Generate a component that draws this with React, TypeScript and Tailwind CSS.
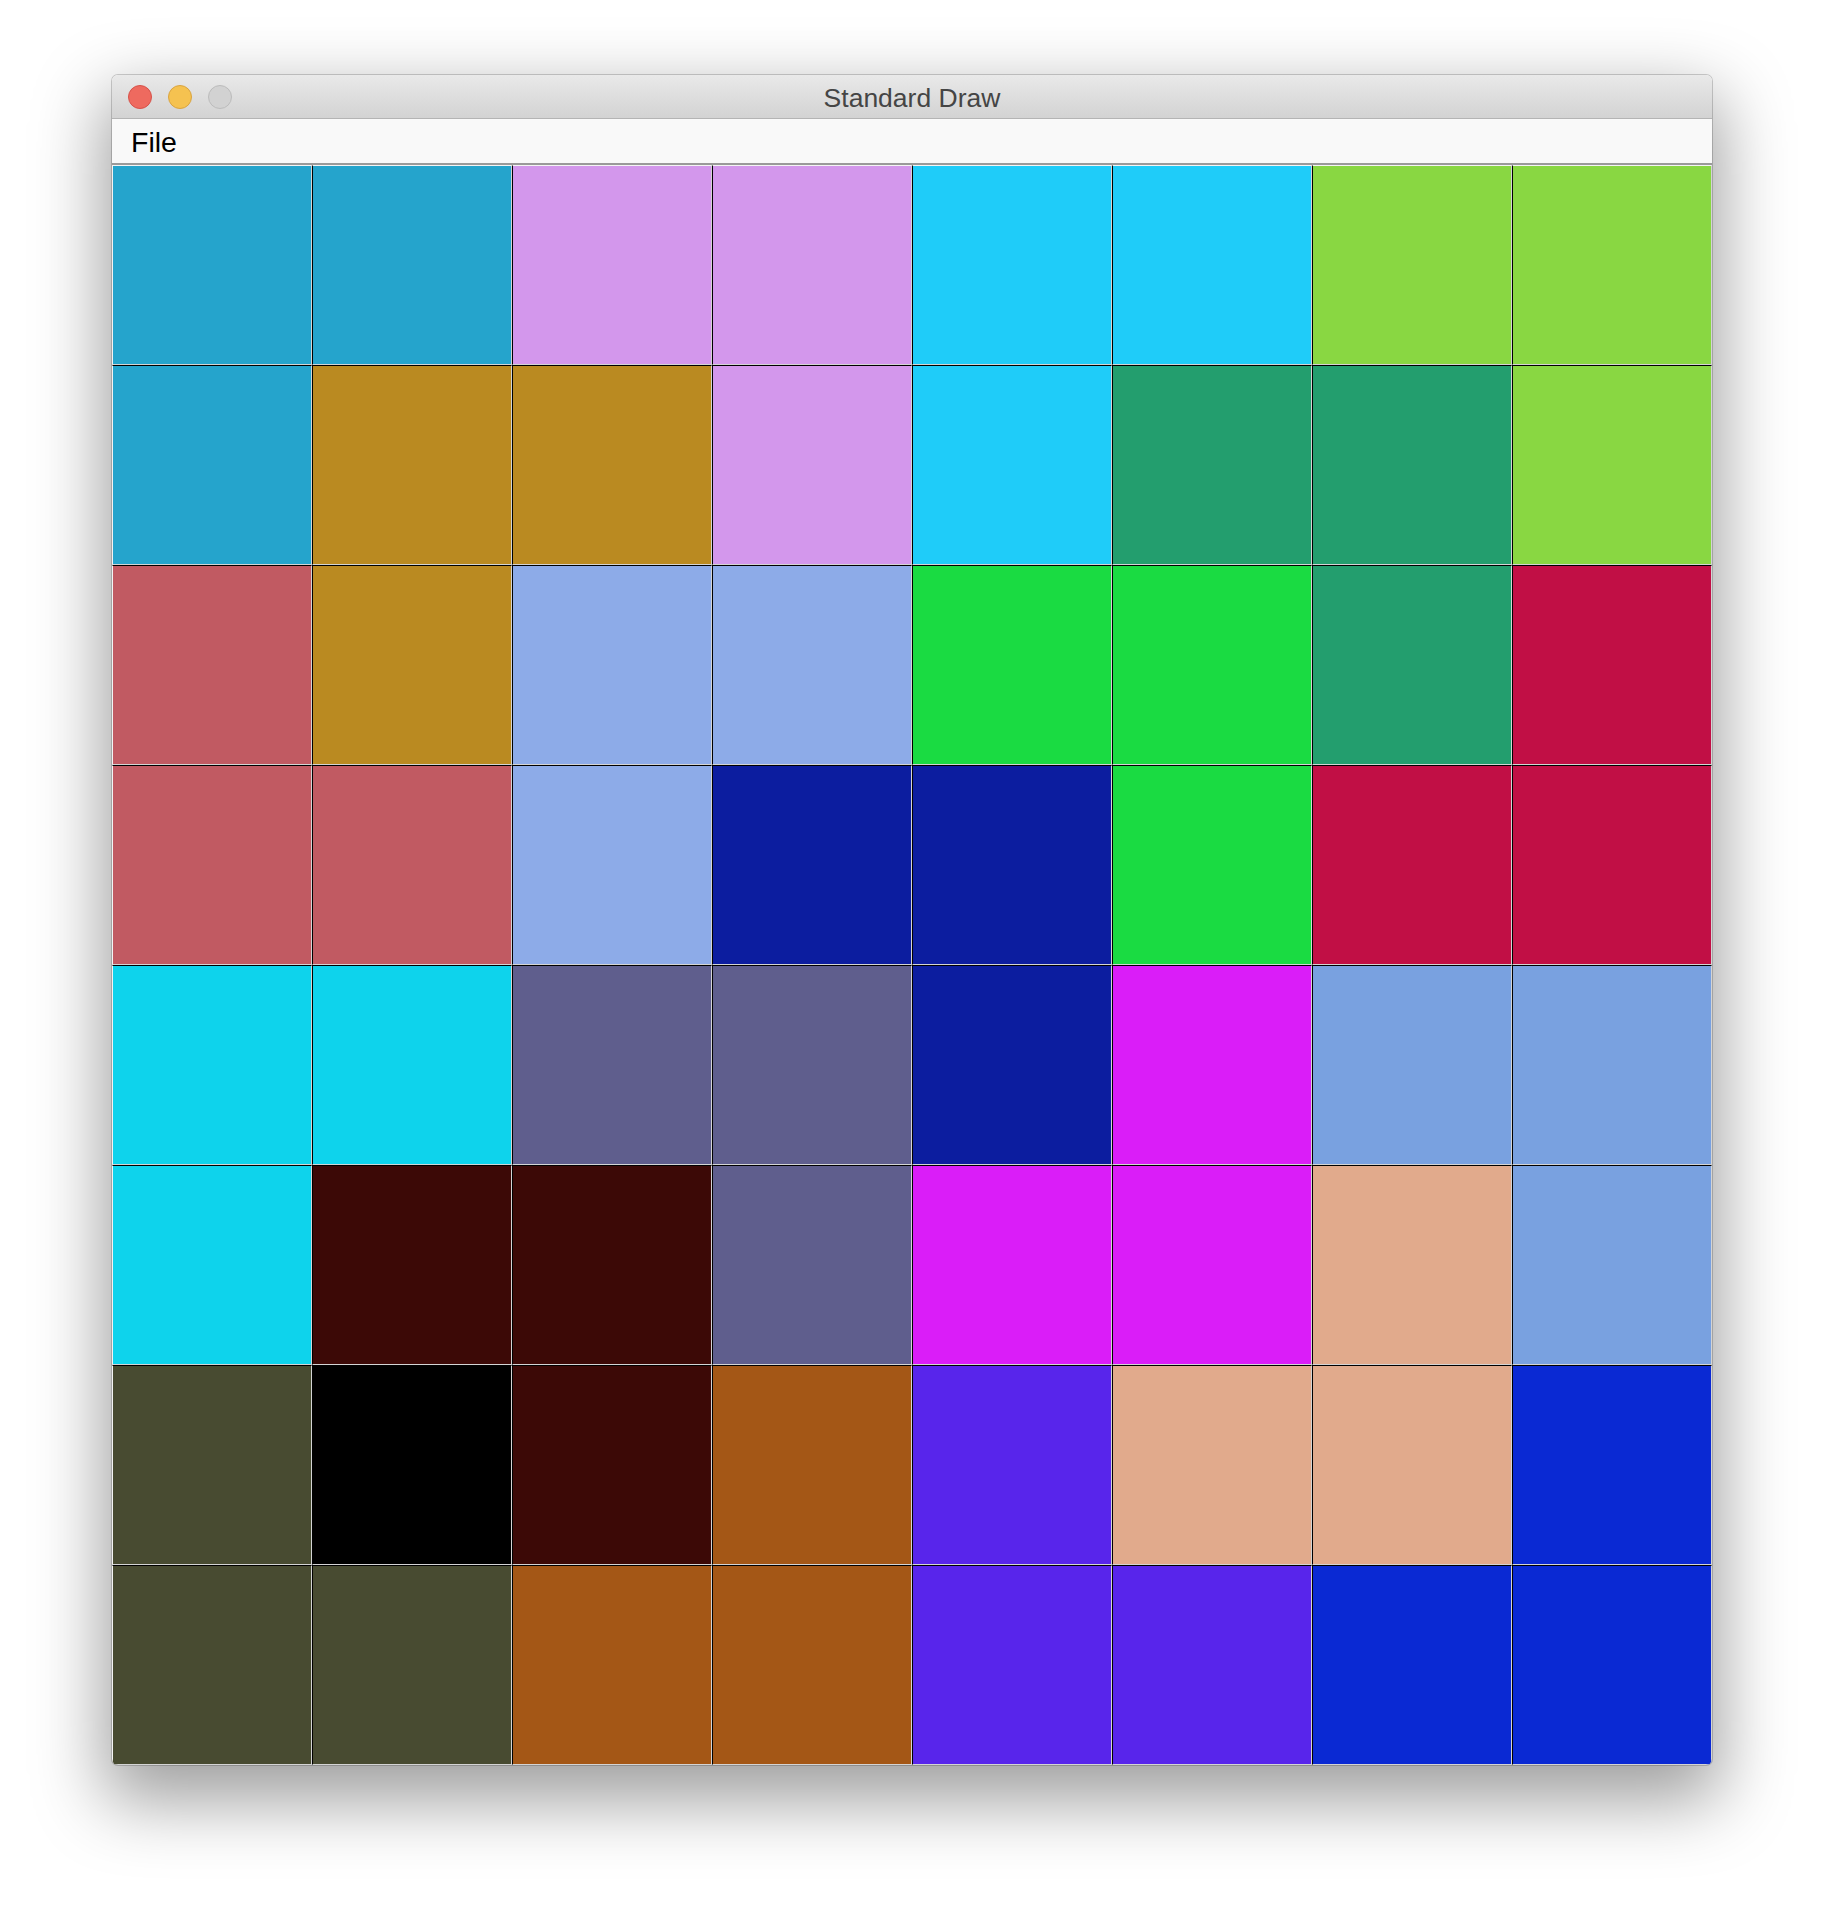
import * as React from "react";

// palette used by the drawing
const C: Record<string, string> = {
  T: "#25a4cc",
  L: "#d397ec",
  S: "#1fccf9",
  G: "#89d742",
  O: "#ba8a21",
  E: "#239e6e",
  R: "#c15a62",
  P: "#8dabe8",
  B: "#1adb42",
  K: "#c10f45",
  N: "#0c1d9f",
  C: "#0ed3ec",
  M: "#5f5e8d",
  A: "#da1df8",
  F: "#79a1e0",
  D: "#3c0906",
  H: "#e1aa8c",
  V: "#484b31",
  X: "#000000",
  W: "#a45716",
  I: "#5825eb",
  U: "#0a29d3",
};

const rows = [
  "TTLLSSGG",
  "TOOLSEEG",
  "ROPPBBEK",
  "RRPNNBKK",
  "CCMMNAFF",
  "CDDMAAHF",
  "VXDWIHHU",
  "VVWWIIUU",
];

function Cell({ color, r, c }: { color: string; r: number; c: number }) {
  const left = c === 0 ? "border-l-[#f4f4f4]" : "border-l-black";
  const top = r === 0 ? "border-t-[#f4f4f4]" : "border-t-black";
  return (
    <div
      className={`w-[200px] h-[200px] border border-r-[#d4d4d4] border-b-[#d4d4d4] ${left} ${top}`}
      style={{ backgroundColor: color }}
    />
  );
}

export default function App() {
  return (
    <div className="min-h-[1912px] w-[1824px] bg-white pt-[75px] pl-[112px] font-['Liberation_Sans',Arial,sans-serif]">
      <div className="w-[1600px] rounded-[6px] overflow-hidden shadow-[0_0_0_1px_rgba(0,0,0,0.18),0_28px_70px_8px_rgba(0,0,0,0.38)]">
        {/* title bar */}
        <div className="relative h-[44px] bg-gradient-to-b from-[#e9e9e9] to-[#d3d3d3] border-b border-[#b4b4b4] flex items-center justify-center">
          <div className="absolute left-[16px] top-[10px] flex gap-[16px]">
            <span className="w-[24px] h-[24px] rounded-full bg-[#ee6a5f] border border-[#d6524a]" />
            <span className="w-[24px] h-[24px] rounded-full bg-[#f5c250] border border-[#d9a441]" />
            <span className="w-[24px] h-[24px] rounded-full bg-[#d2d2d2] border border-[#bcbcbc]" />
          </div>
          <span className="text-[26.5px] text-[#454545] leading-none mt-[4px]">Standard Draw</span>
        </div>
        {/* menu bar */}
        <div className="h-[46px] bg-[#f9f9f9] border-b-2 border-[#9a9a9a] flex items-center pl-[19px]">
          <span className="text-[28.5px] text-black leading-none mt-[2px]">File</span>
        </div>
        {/* canvas */}
        <div className="grid grid-cols-8">
          {rows.map((row, r) =>
            row.split("").map((k, c) => <Cell key={`${r}-${c}`} color={C[k]} r={r} c={c} />)
          )}
        </div>
      </div>
    </div>
  );
}
